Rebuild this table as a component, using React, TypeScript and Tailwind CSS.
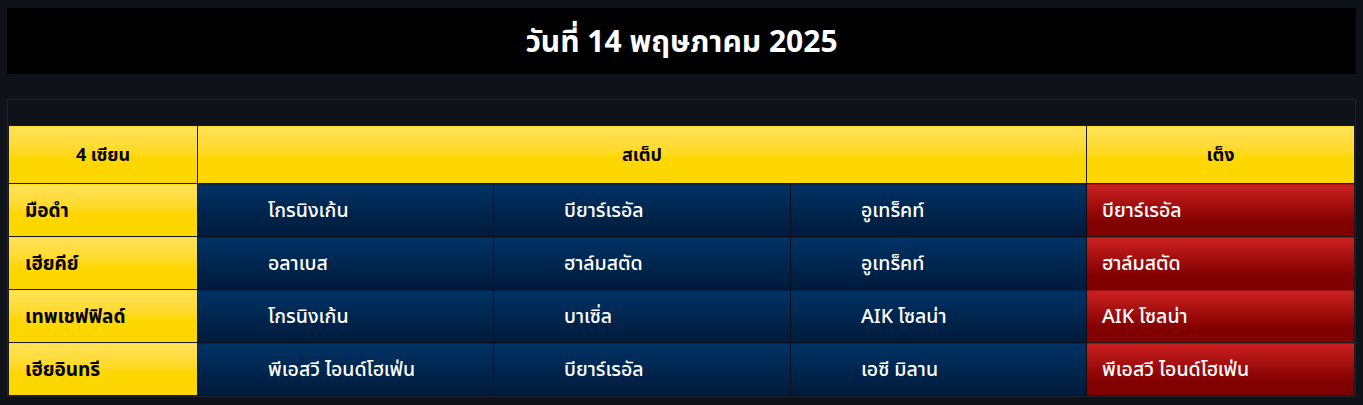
import React from "react";

const rows = [
  { name: "มือดำ", steps: ["โกรนิงเก้น", "บียาร์เรอัล", "อูเทร็คท์"], single: "บียาร์เรอัล" },
  { name: "เฮียคีย์", steps: ["อลาเบส", "ฮาล์มสตัด", "อูเทร็คท์"], single: "ฮาล์มสตัด" },
  { name: "เทพเชฟฟิลด์", steps: ["โกรนิงเก้น", "บาเซิ่ล", "AIK โซลน่า"], single: "AIK โซลน่า" },
  { name: "เฮียอินทรี", steps: ["พีเอสวี ไอนด์โฮเฟ่น", "บียาร์เรอัล", "เอซี มิลาน"], single: "พีเอสวี ไอนด์โฮเฟ่น" },
];

const yellow = "border border-[#1a1a1a] bg-gradient-to-b from-[#ffe257] to-[#ffd700] to-[55%] text-black font-bold";

export default function App() {
  return (
    <div
      className="min-h-[405px] bg-[#0f1219] px-[7px] pt-[8px]"
      style={{ fontFamily: '"Noto Sans", "Noto Sans Thai", "Noto Sans CJK SC", sans-serif' }}
    >
      <div className="h-[66px] bg-black flex items-center justify-center">
        <h1 className="text-white text-[30px] font-bold leading-none">วันที่ 14 พฤษภาคม 2025</h1>
      </div>
      <div className="mt-[25px] border border-[#1e2229] pt-[25px]">
        <table className="w-full border-collapse table-fixed">
          <colgroup>
            <col className="w-[189px]" />
            <col className="w-[296px]" />
            <col className="w-[297px]" />
            <col className="w-[296px]" />
            <col />
          </colgroup>
          <thead>
            <tr className="h-[58px]">
              <th className={`${yellow} text-[18px]`}>4 เซียน</th>
              <th colSpan={3} className={`${yellow} text-[18px]`}>สเต็ป</th>
              <th className={`${yellow} text-[18px]`}>เต็ง</th>
            </tr>
          </thead>
          <tbody>
            {rows.map((r) => (
              <tr key={r.name} className="h-[53px]">
                <td className={`${yellow} text-[19px] pl-[16px]`}>{r.name}</td>
                {r.steps.map((s, i) => (
                  <td key={i} className="border border-[#0a0f1a] bg-gradient-to-b from-[#003366] to-[#001a3a] text-white text-[19.5px] font-medium pl-[70px]">{s}</td>
                ))}
                <td className="border border-[#1a1a1a] bg-gradient-to-b from-[#cc2020] to-[#800000] to-[75%] text-white text-[19.5px] font-medium pl-[15px]">{r.single}</td>
              </tr>
            ))}
          </tbody>
        </table>
      </div>
    </div>
  );
}
